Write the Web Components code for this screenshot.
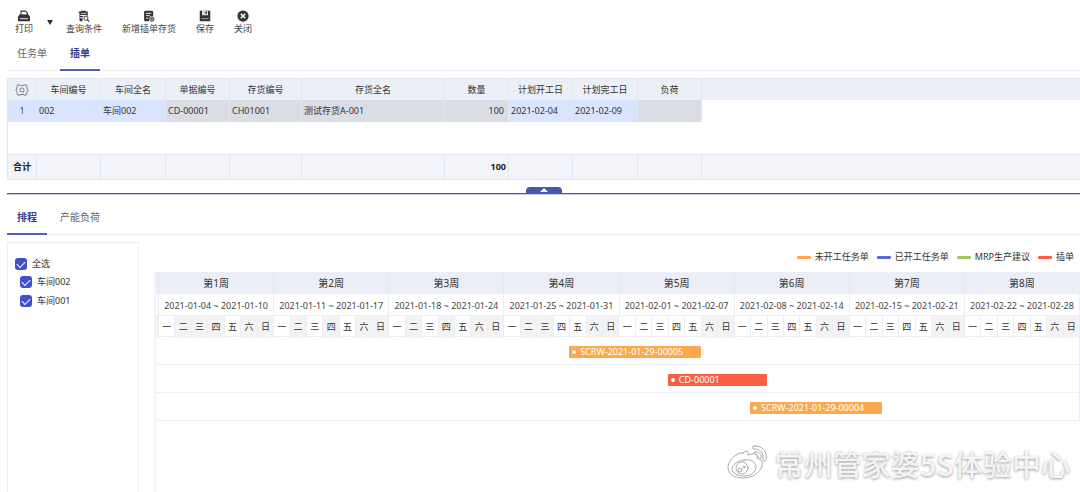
<!DOCTYPE html>
<html lang="zh-CN">
<head>
<meta charset="utf-8">
<title>插单排程</title>
<style>
  html, body { margin: 0; background: #fff; }
  body { font-family: "Noto Sans", "Noto Sans CJK SC", sans-serif; font-size: 9px; line-height: 12px; color: #333; }
</style>
</head>
<body>
<schedule-page></schedule-page>
<script>
const make = (tag, css, html, init) => customElements.define(tag, class extends HTMLElement {
  constructor() {
    super();
    this.attachShadow({ mode: 'open' });
  }
  connectedCallback() {
    const markup = typeof html === 'function' ? html(this) : html;
    this.shadowRoot.innerHTML = `<style>*{box-sizing:border-box}${css}</style>${markup}`;
    if (init) init(this);
  }
});

const ICONS = {
  print: '<path d="M4 1.500h6L12.500 4v3H4z" fill="#fff" stroke="#333" stroke-width="1.500"/><path d="M2 6h12l2 3v5a1 1 0 0 1-1 1H1a1 1 0 0 1-1-1V9z"/><path d="M2.500 11h11v1.200h-11z" fill="#fff"/>',
  query: '<path d="M1 2h3V1h6v1h3v5.500h-1.500V6.500H3V8h4v1.500H3V11h3v4H3.500A1.500 1.500 0 0 1 2 13.500V4H1z"/><path d="M4 4.500h7" stroke="#fff"/><circle cx="10.500" cy="11" r="2.700" fill="#fff" stroke="#333" stroke-width="1.300"/><path d="M12.500 13l2.500 2.500" stroke="#333" stroke-width="1.500"/>',
  add: '<path d="M3 1h9a1.500 1.500 0 0 1 1.500 1.500V8H12a4 4 0 0 0-4 4v3H3a1.500 1.500 0 0 1-1.500-1.500v-11A1.500 1.500 0 0 1 3 1z"/><path d="M4 4.500h7M4 7.500h5M4 11h3" stroke="#fff" stroke-width="1.200"/><circle cx="11.800" cy="12" r="2.900" fill="#fff" stroke="#333" stroke-width="1.300"/><path d="M11.800 10.300v3.400M10.100 12h3.400" stroke="#333" stroke-width="1.100"/>',
  save: '<path d="M1 1h14v14H1z"/><path d="M4 1h8v6H4z" fill="#ddd"/><path d="M8.500 1.500h2V5h-2z"/><path d="M3 11.500h10" stroke="#bbb" stroke-width="1"/>',
  close: '<circle cx="8" cy="8" r="7.500"/><path d="M5 5l6 6M11 5l-6 6" stroke="#fff" stroke-width="2"/>'
};

make('tool-button', `
  :host { display: block; }
  button { display: flex; flex-direction: column; align-items: center; gap: 1px; margin: 0; padding: 0 10px;
    border: 0; background: none; font: inherit; color: #444; white-space: nowrap; cursor: pointer; }
  svg { display: block; width: 12px; height: 12px; fill: #333; }
`, el => `<button type="button"><svg viewBox="0 0 16 16" aria-hidden="true">${ICONS[el.getAttribute('icon')]}</svg><slot></slot></button>`);

make('tool-bar', `
  :host { display: flex; align-items: flex-start; height: 38px; padding: 10px 0 0 5px; box-sizing: border-box; }
  .more { display: flex; justify-content: center; width: 13px; height: 24px; align-items: center; padding: 0; border: 0; background: none; cursor: pointer; }
  .more svg { width: 6px; height: 5px; fill: #333; }
`, `
  <tool-button icon="print">打印</tool-button>
  <button class="more" type="button" aria-label="更多打印选项"><svg viewBox="0 0 6 5"><path d="M0 0h6L3 5z"/></svg></button>
  <tool-button icon="query">查询条件</tool-button>
  <tool-button icon="add">新增插单存货</tool-button>
  <tool-button icon="save">保存</tool-button>
  <tool-button icon="close">关闭</tool-button>
`);

make('tab-strip', `
  :host { display: block; border-bottom: 1px solid #eceef6; }
  div { display: flex; gap: 3px; margin-bottom: -1px; }
  button { height: 33px; padding: 0 10px 1px; border: 0; border-bottom: 2px solid transparent; background: none;
    font: inherit; font-size: 10px; line-height: 30px; color: #666; cursor: pointer; }
  button[aria-selected=true] { color: #35418f; font-weight: 700; border-color: #535eb0; }
`, el => {
  const active = el.getAttribute('active');
  return `<div role="tablist">${el.getAttribute('tabs').split(',').map(t =>
    `<button type="button" role="tab" aria-selected="${t === active}">${t}</button>`).join('')}</div>`;
});

make('order-grid', `
  :host { display: block; }
  table { width: 100%; table-layout: fixed; border-collapse: separate; border-spacing: 0; }
  th, td { padding: 0 4px 0 2px; border-right: 1px solid #e2e7f2; font-weight: 400; text-align: left; white-space: nowrap; overflow: hidden; }
  th:first-child, td:first-child { border-left: 1px solid #e2e7f2; text-align: center; padding: 0; }
  th:last-child, td:last-child { border-right: 0; }
  thead th { height: 22px; background: #ebeff7; border-top: 1px solid #e0e6f1; text-align: center; padding: 0; }
  .row td { height: 22px; background: #dadde4; border-right-color: #e4e7ee; }
  .row .edit { background: #d9e4ff; border-right-color: #dfe6f6; }
  .row td:first-child { color: #4d3f78; }
  .row td:last-child { background: #fff; }
  .gap td { height: 32px; border-right: 0; }
  tfoot td, tfoot th { height: 26px; background: #f3f4f9; border-top: 1px solid #e2e7f2; border-bottom: 1px solid #e2e7f2; font-weight: 700; color: #222; }
  tfoot td { padding-right: 2px; }
  td.num { text-align: right; }
  svg { display: block; width: 14px; height: 14px; margin: 0 auto; fill: none; stroke: #858a94; stroke-width: 1.200; }
`, () => {
  const widths = [30, 64, 65, 64, 72, 143, 64, 64, 65, 64];
  const heads = ['车间编号', '车间全名', '单据编号', '存货编号', '存货全名', '数量', '计划开工日', '计划完工日', '负荷', ''];
  const cells = [['1', 'edit'], ['002', 'edit'], ['车间002', 'edit'], ['CD-00001', ''], ['CH01001', ''], ['测试存货A-001', ''],
    ['100', 'num'], ['2021-02-04', 'edit'], ['2021-02-09', 'edit'], ['', ''], ['', '']];
  const gear = '<svg viewBox="0 0 16 16" role="img" aria-label="列设置"><path d="M4.500 1.800Q6 3 8 3t3.500-1.200l2 1.400Q12.800 5.500 15 8q-2.200 2.500-1.500 4.800l-2 1.400Q10 13 8 13t-3.500 1.200l-2-1.400Q3.200 10.500 1 8q2.200-2.500 1.500-4.800z"/><circle cx="8" cy="8" r="2.300"/></svg>';
  return `<table>
    <colgroup>${widths.map(w => `<col style="width:${w}px">`).join('')}<col></colgroup>
    <thead><tr><th scope="col">${gear}</th>${heads.map(h => `<th scope="col">${h}</th>`).join('')}</tr></thead>
    <tbody>
      <tr class="row">${cells.map(([t, c]) => `<td class="${c}">${t}</td>`).join('')}</tr>
      <tr class="gap"><td colspan="11"></td></tr>
    </tbody>
    <tfoot><tr><th scope="row">合计</th>${cells.slice(1).map((c, i) => `<td class="num">${i === 5 ? '100' : ''}</td>`).join('')}</tr></tfoot>
  </table>`;
});

make('pane-splitter', `
  :host { display: flex; justify-content: center; padding-top: 7px; border-bottom: 1px solid #4656ae; box-shadow: 0 1px #c3c9e6; }
  button { display: flex; justify-content: center; align-items: flex-end; width: 36px; height: 6px; padding: 0 0 1px; border: 0; border-radius: 4px 4px 0 0; background: #4858ae; cursor: pointer; }
  svg { display: block; width: 8px; height: 4px; fill: #fff; }
`, '<button type="button" aria-label="收起上方面板"><svg viewBox="0 0 8 4"><path d="M4 0l4 4H0z"/></svg></button>');

make('check-item', `
  :host { display: block; }
  label { display: flex; align-items: center; gap: 5px; height: 12px; }
  input { appearance: none; display: grid; place-items: center; width: 12px; height: 12px; margin: 0; border-radius: 3px; background: #3f51cc; }
  input::after { content: ""; width: 7px; height: 4px; margin-bottom: 2px; border: solid #fff; border-width: 0 0 1px 1px; transform: rotate(-45deg); }
`, '<label><input type="checkbox" checked><slot></slot></label>');

make('workshop-list', `
  :host { display: block; width: 132px; flex: none; box-sizing: border-box; border: 1px solid #eceef5; border-bottom: 0; padding: 15px 7px 0; }
  .sub { display: grid; gap: 7px; padding: 6px 0 0 5px; }
`, `<check-item>全选</check-item><div class="sub"><check-item>车间002</check-item><check-item>车间001</check-item></div>`);

make('chart-legend', `
  :host { display: block; }
  ul { display: flex; justify-content: flex-end; gap: 8px; margin: 0; padding: 9px 6px 0 0; list-style: none; }
  li { display: flex; align-items: center; gap: 4px; white-space: nowrap; }
  i { width: 14px; height: 3px; border-radius: 1px; background: var(--c); }
`, `<ul>
  <li><i style="--c:#fba94c"></i>未开工任务单</li>
  <li><i style="--c:#5b6bdf"></i>已开工任务单</li>
  <li><i style="--c:#a2c763"></i>MRP生产建议</li>
  <li><i style="--c:#fb5f42"></i>插单</li>
</ul>`);

make('gantt-bar', `
  :host { display: flex; align-items: center; align-self: center; gap: 4px; height: 12px; padding-left: 3px; box-sizing: border-box;
    border-radius: 1px; color: #fff; white-space: nowrap; overflow: hidden; }
  i { width: 4px; height: 4px; border-radius: 50%; background: #fff; }
`, '<i></i><span><slot></slot></span>');

make('gantt-chart', `
  :host { display: block; flex: 1; border-left: 2px solid #f3f4fa; }
  .line { display: grid; grid-template-columns: 2px repeat(56, minmax(0, 1fr)); border-right: 1px solid #eceef6; text-align: center; white-space: nowrap; }
  .line > span { border-left: 1px solid #eceef6; }
  .weeks { background: #ebeef7; font-size: 10px; line-height: 22px; }
  .weeks > span { grid-column: span 7; border-color: #e4e8f2; }
  .dates { height: 21px; line-height: 23px; color: #444; }
  .dates > span { grid-column: span 7; }
  .days { height: 22px; line-height: 22px; border-top: 1px solid #eceef6; border-bottom: 1px solid #eceef6; }
  .days > i, .days > .off { background: #f3f3f3; }
  .job { height: 28px; padding-top: 2px; border-bottom: 1px solid #eff0f6; }
`, () => {
  const p = n => String(n).padStart(2, '0');
  const day = n => { const d = new Date(Date.UTC(2021, 0, 4 + n)); return `${d.getUTCFullYear()}-${p(d.getUTCMonth() + 1)}-${p(d.getUTCDate())}`; };
  const weeks = [...Array(8).keys()];
  const rest = [[1, 2, 3], [1, 3], [1, 3], [1, 2], [], [], [], []];
  const names = [...'一二三四五六日'];
  const jobs = [['SCRW-2021-01-29-00005', 25, 8, '#fba94c'], ['CD-00001', 31, 6, '#fb5f42'], ['SCRW-2021-01-29-00004', 36, 8, '#fba94c']];
  return `
    <div class="line weeks"><i></i>${weeks.map(w => `<span>第${w + 1}周</span>`).join('')}</div>
    <div class="line dates"><i></i>${weeks.map(w => `<span>${day(w * 7)} ~ ${day(w * 7 + 6)}</span>`).join('')}</div>
    <div class="line days"><i></i>${weeks.map(w => names.map((n, i) => `<span class="${i > 4 || rest[w].includes(i) ? 'off' : ''}">${n}</span>`).join('')).join('')}</div>
    ${jobs.map(([t, s, len, c]) => `<div class="line job"><gantt-bar style="grid-column:${s + 2} / span ${len};background:${c}">${t}</gantt-bar></div>`).join('')}`;
});

make('page-watermark', `
  :host { position: absolute; right: 10px; bottom: 10px; display: flex; align-items: center; gap: 6px; pointer-events: none;
    font-family: "Noto Sans CJK SC", sans-serif; font-size: 29px; font-weight: 500; line-height: 38px; color: #f4f4f4; white-space: nowrap;
    text-shadow: 0 1px 3px rgba(0, 0, 0, .4); }
  svg { display: block; width: 42px; height: 36px; fill: #fff; stroke: #aaa; stroke-width: 1; stroke-linecap: round; }
`, `<svg viewBox="0 0 42 36" aria-hidden="true">
  <path d="M16 8c3-3 6-3 5 2 5-2 10-2 9 3 4 1 6 4 5 8-2 7-10 12-19 12S1 29 1 22C1 16 9 7 16 8z"/>
  <path d="M17 15c7-1 12 2 12 7s-5 9-12 9-12-3-12-7 5-8 12-9z"/>
  <circle cx="15" cy="23" r="6"/><circle cx="13" cy="25" r="2"/><circle cx="17" cy="22" r="1"/>
  <path d="M27 1c8-1 14 6 12 14-1 2-4 1-3-1 1-6-3-10-9-10-2 0-2-3 0-3z"/>
  <path d="M28 7c4-1 7 3 6 6-1 2-3 1-3-1 0-2-1-3-3-3-1 0-1-2 0-2z"/>
</svg><span>常州管家婆5S体验中心</span>`);

make('schedule-page', `
  :host { position: relative; display: flex; flex-direction: column; min-height: 100vh; overflow: hidden; }
  main { flex: 1; display: flex; flex-direction: column; padding-left: 7px; }
  order-grid { margin-top: 7px; }
  .lower { margin-top: 8px; }
  .plan { flex: 1; display: flex; gap: 15px; margin-top: 7px; }
  .chart { flex: 1; min-width: 0; display: flex; flex-direction: column; gap: 9px; }
`, `
  <tool-bar></tool-bar>
  <main>
    <tab-strip tabs="任务单,插单" active="插单"></tab-strip>
    <order-grid></order-grid>
    <pane-splitter></pane-splitter>
    <tab-strip class="lower" tabs="排程,产能负荷" active="排程"></tab-strip>
    <div class="plan">
      <workshop-list></workshop-list>
      <div class="chart"><chart-legend></chart-legend><gantt-chart></gantt-chart></div>
    </div>
  </main>
  <page-watermark></page-watermark>
`);
</script>
</body>
</html>
